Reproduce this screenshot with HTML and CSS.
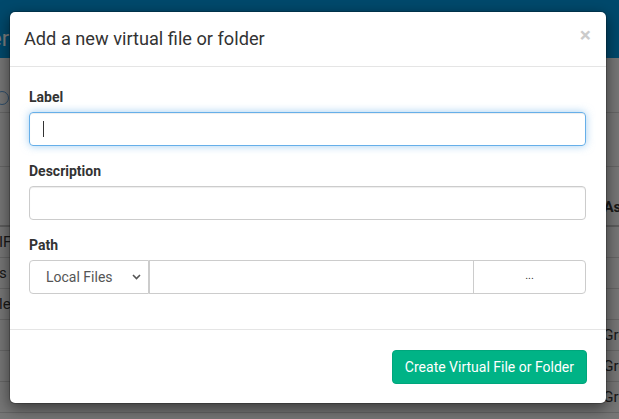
FILE: index.html
```html
<!DOCTYPE html>
<html>
<head>
<meta charset="utf-8">
<link rel="stylesheet" href="styles.css">
</head>
<body>
<div class="page">
  <div class="topbar"><span class="brand">er</span></div>
  <div class="toolbar"><span class="info-icon"></span></div>
  <div class="toolbar2"></div>
  <div class="thead"><span></span><span class="th">Ass</span></div>
  <div class="row"><span class="lt">IF</span><span></span></div>
  <div class="row"><span class="lt">s</span><span></span></div>
  <div class="row"><span class="lt">le</span><span></span></div>
  <div class="row"><span></span><span class="rt">Gro</span></div>
  <div class="row"><span></span><span class="rt">Gro</span></div>
  <div class="row"><span></span><span class="rt">Gro</span></div>
</div>
<div class="backdrop"></div>
<div class="modal">
  <div class="modal-header">
    <h4 class="modal-title">Add a new virtual file or folder</h4>
    <span class="close">×</span>
  </div>
  <div class="modal-body">
    <div class="form-group">
      <label class="lbl">Label</label>
      <div class="form-control focused"><span class="caret"></span></div>
    </div>
    <div class="form-group">
      <label class="lbl">Description</label>
      <div class="form-control"></div>
    </div>
    <div class="form-group">
      <label class="lbl">Path</label>
      <div class="input-group">
        <div class="select">
          <span>Local Files</span>
          <svg width="9" height="6" viewBox="0 0 9 6"><path d="M1 1 L4.5 4.5 L8 1" fill="none" stroke="#555" stroke-width="1.6"/></svg>
        </div>
        <div class="path-input"></div>
        <div class="browse">...</div>
      </div>
    </div>
  </div>
  <div class="modal-footer">
    <button class="btn-create">Create Virtual File or Folder</button>
  </div>
</div>
</body>
</html>
```

FILE: styles.css
```css
* { box-sizing: border-box; }
html, body { margin: 0; padding: 0; }
body {
  width: 619px;
  height: 419px;
  overflow: hidden;
  font-family: Roboto, "Liberation Sans", Arial, sans-serif;
  font-size: 14px;
  color: #333;
  background: #eee;
  position: relative;
}
.page { width: 619px; }
.topbar {
  height: 58px;
  background: #0093d8;
  display: flex;
  align-items: center;
  padding-top: 18px;
}
.brand {
  color: #fff;
  font-size: 22px;
  margin-left: -10px;
}
.toolbar {
  height: 55px;
  border-bottom: 1px solid #ccc;
  display: flex;
  align-items: center;
  padding-top: 26px;
}
.info-icon {
  width: 14px;
  height: 14px;
  border: 1.5px solid #5b9bd5;
  border-radius: 50%;
  margin-left: -5px;
}
.toolbar2 {
  height: 54px;
  border-bottom: 1px solid #ccc;
}
.thead {
  height: 60px;
  border-bottom: 2px solid #bbb;
  display: flex;
  justify-content: space-between;
  align-items: flex-end;
  padding-bottom: 9px;
}
.th { font-weight: bold; margin-right: -10px; font-size: 15px; }
.row {
  height: 31px;
  border-bottom: 1px solid #ccc;
  display: flex;
  justify-content: space-between;
  align-items: center;
  font-size: 15px;
}
.lt { margin-left: -1px; }
.rt { margin-right: -8px; }

.backdrop {
  position: absolute;
  inset: 0;
  background: rgba(0, 0, 0, 0.5);
}

.modal {
  position: absolute;
  top: 11px;
  left: 9px;
  width: 598px;
  background: #fff;
  border: 1px solid rgba(0, 0, 0, 0.2);
  border-radius: 6px;
  box-shadow: 0 5px 15px rgba(0, 0, 0, 0.5);
  background-clip: padding-box;
}
.modal-header {
  padding: 14px 15px 14px 14px;
  border-bottom: 1px solid #e5e5e5;
  display: flex;
  justify-content: space-between;
  align-items: center;
}
.modal-title {
  margin: 0;
  font-size: 18.2px;
  font-weight: 400;
  line-height: 26px;
  color: #333;
}
.close {
  font-size: 21px;
  font-weight: bold;
  line-height: 1;
  color: #000;
  opacity: 0.2;
  margin-top: -7px;
}
.modal-body {
  padding: 20px 20px 20px 19px;
  display: flow-root;
}
.form-group { margin-bottom: 15px; }
.lbl {
  display: block;
  font-weight: bold;
  line-height: 20px;
  margin-bottom: 5px;
  color: #333;
}
.form-control {
  height: 34px;
  border: 1px solid #ccc;
  border-radius: 4px;
  box-shadow: inset 0 1px 1px rgba(0, 0, 0, 0.075);
  padding: 8px 12px;
  display: flex;
  align-items: center;
}
.form-control.focused {
  border-color: #66afe9;
  box-shadow: inset 0 1px 1px rgba(0, 0, 0, 0.075), 0 0 8px rgba(102, 175, 233, 0.6);
}
.caret {
  width: 1px;
  height: 16px;
  background: #333;
  margin-left: 1px;
}
.input-group {
  display: flex;
  height: 34px;
}
.select {
  width: 120px;
  border: 1px solid #ccc;
  border-radius: 4px 0 0 4px;
  display: flex;
  align-items: center;
  justify-content: space-between;
  padding: 0 7px 0 16px;
  color: #555;
}
.path-input {
  flex: 1;
  border: 1px solid #ccc;
}
.browse {
  width: 113px;
  margin-left: -1px;
  border: 1px solid #ccc;
  border-radius: 0 4px 4px 0;
  display: flex;
  align-items: center;
  justify-content: center;
  font-size: 11px;
  color: #333;
  padding-bottom: 3px;
}
.modal-footer {
  border-top: 1px solid #e5e5e5;
  padding: 20px 19px 19px;
  display: flex;
  justify-content: flex-end;
}
.btn-create {
  height: 34px;
  padding: 6px 12px;
  font-family: Roboto, "Liberation Sans", Arial, sans-serif;
  font-size: 14px;
  color: #fff;
  background: #00b386;
  border: 1px solid #00a67c;
  border-radius: 4px;
  line-height: 20px;
}
```
